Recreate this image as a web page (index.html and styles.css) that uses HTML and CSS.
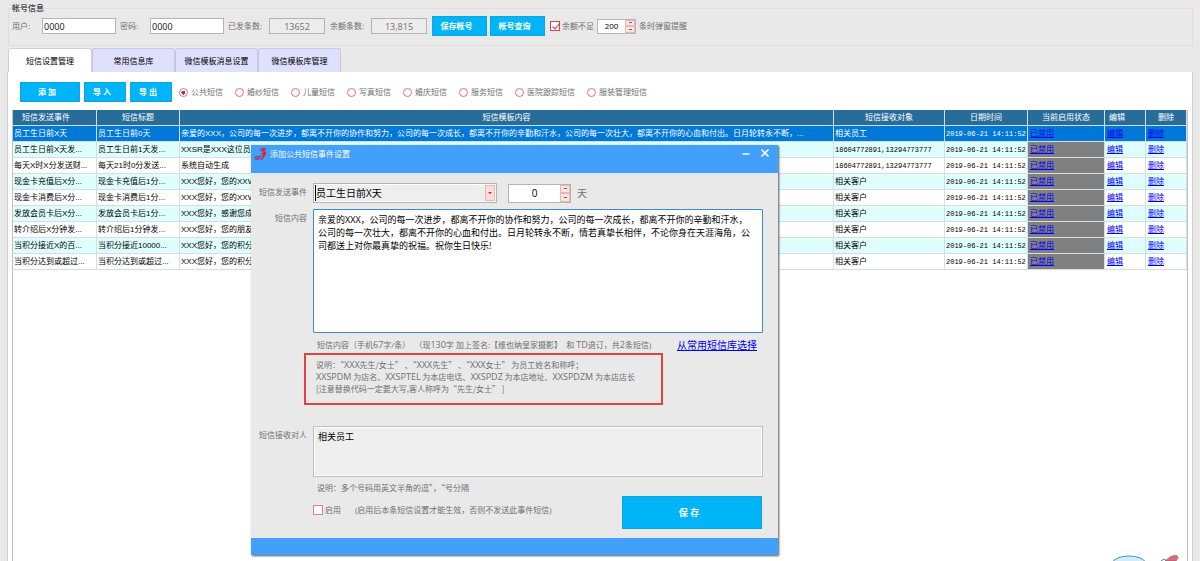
FILE: index.html
```html
<!DOCTYPE html>
<html lang="zh-CN">
<head>
<meta charset="utf-8">
<title>短信设置管理</title>
<link rel="stylesheet" href="styles.css">
</head>
<body>
<fieldset class="account">
  <legend>帐号信息</legend>
  <div class="account-row">
    <label class="w-user" for="user">用户:</label><input class="field" id="user" type="text" value="0000">
    <label class="w-user" for="pass">密码:</label><input class="field" id="pass" type="text" value="0000">
    <label class="w-count" for="sent">已发条数:</label><input class="field readonly" id="sent" type="text" value="13652" readonly>
    <label class="w-count" for="left">余额条数:</label><input class="field readonly" id="left" type="text" value="13,815" readonly>
    <button class="btn btn-account" type="button">保存帐号</button>
    <button class="btn btn-account" type="button">帐号查询</button>
    <label class="check"><input type="checkbox" checked>余额不足</label>
    <span class="spin spin-small"><input type="text" value="200" aria-label="提醒条数"><span class="spin-btns"><button type="button" aria-label="增加"></button><button type="button" aria-label="减少"></button></span></span>
    <span>条时弹窗提醒</span>
  </div>
</fieldset>

<nav class="tabs">
  <button class="tab active" type="button">短信设置管理</button>
  <button class="tab" type="button">常用信息库</button>
  <button class="tab" type="button">微信模板消息设置</button>
  <button class="tab" type="button">微信模板库管理</button>
</nav>

<main class="panel">
  <div class="toolbar">
    <button class="btn btn-add" type="button">添 加</button>
    <button class="btn btn-io" type="button">导 入</button>
    <button class="btn btn-io" type="button">导 出</button>
    <div class="radios">
      <label><input type="radio" name="kind" checked>公共短信</label>
      <label><input type="radio" name="kind">婚纱短信</label>
      <label><input type="radio" name="kind">儿童短信</label>
      <label><input type="radio" name="kind">写真短信</label>
      <label><input type="radio" name="kind">婚庆短信</label>
      <label><input type="radio" name="kind">服务短信</label>
      <label><input type="radio" name="kind">医院跟踪短信</label>
      <label><input type="radio" name="kind">服装管理短信</label>
    </div>
  </div>
  <div class="grid">
    <table>
      <colgroup><col class="c-event"><col class="c-title"><col><col class="c-target"><col class="c-date"><col class="c-state"><col class="c-act"><col class="c-act"></colgroup>
      <thead>
        <tr><th class="left">短信发送事件</th><th>短信标题</th><th>短信模板内容</th><th>短信接收对象</th><th>日期时间</th><th>当前启用状态</th><th class="act">编辑</th><th>删除</th></tr>
      </thead>
      <tbody>
        <tr class="selected"><td>员工生日前X天</td><td>员工生日前0天</td><td>亲爱的XXX，公司的每一次进步，都离不开你的协作和努力，公司的每一次成长，都离不开你的辛勤和汗水，公司的每一次壮大，都离不开你的心血和付出。日月轮转永不断，...</td><td>相关员工</td><td class="num">2019-06-21 14:11:52</td><td class="state"><a href="#">已禁用</a></td><td><a href="#">编辑</a></td><td><a href="#">删除</a></td></tr>
        <tr><td>员工生日前X天发...</td><td>员工生日前1天发...</td><td>XXSR是XXX这位员工</td><td class="num">18604772891,13294773777</td><td class="num">2019-06-21 14:11:52</td><td class="state"><a href="#">已禁用</a></td><td><a href="#">编辑</a></td><td><a href="#">删除</a></td></tr>
        <tr><td>每天X时X分发送财...</td><td>每天21时0分发送...</td><td>系统自动生成</td><td class="num">18604772891,13294773777</td><td class="num">2019-06-21 14:11:52</td><td class="state"><a href="#">已禁用</a></td><td><a href="#">编辑</a></td><td><a href="#">删除</a></td></tr>
        <tr><td>现金卡充值后X分...</td><td>现金卡充值后1分...</td><td>XXX您好，您的XXW-</td><td>相关客户</td><td class="num">2019-06-21 14:11:52</td><td class="state"><a href="#">已禁用</a></td><td><a href="#">编辑</a></td><td><a href="#">删除</a></td></tr>
        <tr><td>现金卡消费后X分...</td><td>现金卡消费后1分...</td><td>XXX您好，您的XXW-</td><td>相关客户</td><td class="num">2019-06-21 14:11:52</td><td class="state"><a href="#">已禁用</a></td><td><a href="#">编辑</a></td><td><a href="#">删除</a></td></tr>
        <tr><td>发放会员卡后X分...</td><td>发放会员卡后1分...</td><td>XXX您好，感谢您成</td><td>相关客户</td><td class="num">2019-06-21 14:11:52</td><td class="state"><a href="#">已禁用</a></td><td><a href="#">编辑</a></td><td><a href="#">删除</a></td></tr>
        <tr><td>转介绍后X分钟发...</td><td>转介绍后1分钟发...</td><td>XXX您好，您的朋友</td><td>相关客户</td><td class="num">2019-06-21 14:11:52</td><td class="state"><a href="#">已禁用</a></td><td><a href="#">编辑</a></td><td><a href="#">删除</a></td></tr>
        <tr><td>当积分接近X的百...</td><td>当积分接近10000...</td><td>XXX您好，您的积分</td><td>相关客户</td><td class="num">2019-06-21 14:11:52</td><td class="state"><a href="#">已禁用</a></td><td><a href="#">编辑</a></td><td><a href="#">删除</a></td></tr>
        <tr><td>当积分达到或超过...</td><td>当积分达到或超过...</td><td>XXX您好，您的积分</td><td>相关客户</td><td class="num">2019-06-21 14:11:52</td><td class="state"><a href="#">已禁用</a></td><td><a href="#">编辑</a></td><td><a href="#">删除</a></td></tr>
      </tbody>
    </table>
  </div>
</main>

<section class="dialog" role="dialog" aria-labelledby="dlg-title">
  <header class="dlg-head">
    <svg class="logo" viewBox="0 0 16 16" width="16" height="16" aria-hidden="true">
      <path d="M8 2l3-1.500 2 1-1.500 2.500 2 1.500-1 3-2 2-1.500 3-.5-3 1.500-3-2.500-.5 2.500-1.500z" fill="#d8283c"/>
      <path d="M7 2l2 2M1 11l3-1.500 2 1 2-2M2 12.500l4-1 3 1" fill="none" stroke="#a93a68" stroke-width="1.300"/>
    </svg>
    <h1 id="dlg-title">添加公共短信事件设置</h1>
    <button type="button" class="win-btn" aria-label="最小化"><svg viewBox="0 0 10 10" width="10" height="10"><path d="M1.500 6h7" stroke="#fff" stroke-width="1.500"/></svg></button>
    <button type="button" class="win-btn" aria-label="关闭"><svg viewBox="0 0 10 10" width="10" height="10"><path d="M1.500 1.500l7 7M8.500 1.500l-7 7" stroke="#fff" stroke-width="1.600"/></svg></button>
  </header>
  <form class="dlg-body">
    <label class="lab" for="event">短信发送事件</label>
    <div class="event-row">
      <span class="combo"><select id="event"><option>员工生日前X天</option></select><i class="combo-arrow"></i></span>
      <span class="spin spin-large"><input type="text" value="0" aria-label="天数"><span class="spin-btns"><button type="button" aria-label="增加"></button><button type="button" aria-label="减少"></button></span></span>
      <span class="day">天</span>
    </div>
    <label class="lab" for="content">短信内容</label>
    <div>
      <textarea class="content" id="content">亲爱的XXX，公司的每一次进步，都离不开你的协作和努力，公司的每一次成长，都离不开你的辛勤和汗水，公司的每一次壮大，都离不开你的心血和付出。日月轮转永不断，情若真挚长相伴，不论你身在天涯海角，公司都送上对你最真挚的祝福。祝你生日快乐!</textarea>
      <div class="count"><span>短信内容（手机<b>67</b>字/条）&nbsp;&nbsp;（现<b>130</b>字 加上签名:【维也纳皇家摄影】&nbsp; 和 <b>TD</b>退订，共<b>2</b>条短信)</span><a href="#">从常用短信库选择</a></div>
      <p class="note">说明：“<b>XXX</b>先生/女士” 、“<b>XXX</b>先生” 、“<b>XXX</b>女士” 为员工姓名和称呼；<br><b>XXSPDM</b> 为店名、<b>XXSPTEL</b> 为本店电话、<b>XXSPDZ</b> 为本店地址、<b>XXSPDZM</b> 为本店店长<br>[注意替换代码一定要大写,客人称呼为“先生/女士” ]</p>
    </div>
    <label class="lab" for="receiver">短信接收对人</label>
    <div>
      <textarea class="receiver" id="receiver" readonly>相关员工</textarea>
      <p class="hint">说明：多个号码用英文半角的逗”，“号分隔</p>
      <div class="enable">
        <label class="check"><input type="checkbox">启用</label>
        <span class="enable-text">(启用后本条短信设置才能生效，否则不发送此事件短信)</span>
        <button class="btn btn-save" type="button">保 存</button>
      </div>
    </div>
  </form>
  <footer class="dlg-foot"></footer>
</section>

<svg class="mascot" viewBox="0 0 70 6" width="70" height="6" aria-hidden="true">
  <ellipse cx="16" cy="9" rx="17" ry="8" fill="#d3ecfb" stroke="#4a93bd"/>
  <path d="M48 6l3-2 3 2" fill="none" stroke="#3a83c5"/>
  <path d="M52 6l5-4 4-1.500q4-1 4 2.500l-2 3z" fill="#e06a78" stroke="#8a5560" stroke-width=".6"/>
</svg>
</body>
</html>
```
FILE: styles.css
```css
* { box-sizing: border-box; }

body {
  margin: 0;
  height: 100vh;
  overflow: hidden;
  position: relative;
  display: flex;
  flex-direction: column;
  background: #e9e9e9;
  color: #707070;
  font: 8px/12px "Open Sans", "Noto Sans CJK SC", sans-serif;
}

input, button, select, textarea { font: inherit; margin: 0; }
button { padding: 0; cursor: pointer; }
a { color: #0000f0; text-decoration: underline; }
p, h1 { margin: 0; font-weight: 400; }

/* Account bar */
.account {
  margin: 2px 7px 0 8px;
  padding: 2px 3px 9px;
  border: 1px solid #e8dadb;
  min-width: 0;
}
.account legend { padding: 0; color: #000; }
.account-row { display: flex; align-items: center; height: 20px; white-space: nowrap; }
.w-user { width: 30px; }
.w-count { width: 41px; }
.field {
  width: 74px;
  height: 16px;
  margin-right: 4px;
  padding: 0 1px;
  border: 1px solid #b4b4b4;
  background: #fff;
  color: #111;
  font-size: 9px;
}
.field.readonly { width: 56px; margin-right: 5px; background: #ececec; color: #707070; text-align: center; }

.btn { border: 1px solid #10a4e4; background: #00b4f8; color: #fff; font-weight: 700; }
.btn-account { width: 55px; height: 20px; margin-right: 3px; padding-right: 6px; }

.check { display: flex; align-items: center; gap: 2px; }
.check input {
  appearance: none;
  width: 10px;
  height: 10px;
  border: 1px solid #e0808c;
  background: #fff;
}
.check input:checked { position: relative; border-color: #d8414f; }
.check input:checked::after {
  content: "";
  position: absolute;
  left: 3px;
  top: 0;
  width: 3px;
  height: 6px;
  border: solid #d8303c;
  border-width: 0 1px 1px 0;
  transform: rotate(40deg);
}
.account .check { margin: 0 3px 0 2px; }

.spin { display: flex; background: #fff; border: 1px solid #b4b4b4; }
.spin input { flex: 1; min-width: 0; border: 0; padding: 0; background: none; color: #000; text-align: center; }
.spin-btns { display: flex; flex-direction: column; width: 10px; }
.spin-btns button {
  flex: 1;
  display: flex;
  align-items: center;
  justify-content: center;
  min-height: 0;
  border: 1px solid #e5b9b9;
  background: #fce4e2;
}
.spin-btns button::after { content: ""; width: 3px; height: 1px; background: #d04040; }
.spin-small { width: 39px; height: 15px; margin-right: 3px; }
.spin-large { width: 63px; height: 19px; font-size: 10px; }

/* Tabs */
.tabs { display: flex; margin: 2px 0 0 8px; }
.tab {
  width: 83px;
  height: 24px;
  border: 1px solid #c8c8dc;
  border-bottom: 0;
  border-radius: 3px 3px 0 0;
  background: #dfe0fd;
  color: #000;
}
.tab.active { width: 84px; background: #fff; border-color: #d0d0d0; }

.panel {
  flex: 1;
  min-height: 0;
  display: flex;
  flex-direction: column;
  margin: 0 7px 0 7px;
  padding: 10px 4px 0;
  background: #fff;
  border: solid #d0d0d0;
  border-width: 0 1px;
}
.toolbar { display: flex; align-items: center; gap: 4px; padding-left: 8px; height: 20px; }
.toolbar .btn { height: 20px; }
.btn-add { width: 60px; padding-right: 6px; }
.btn-io { width: 42px; padding-right: 6px; }
.radios { display: flex; gap: 12px; margin-left: 3px; white-space: nowrap; }
.radios label { display: flex; align-items: center; gap: 3px; }
.radios input {
  appearance: none;
  width: 9px;
  height: 9px;
  border: 1px solid #e0707f;
  border-radius: 50%;
  background: #fff;
}
.radios input:checked { background: radial-gradient(circle, #c82838 0 2px, #fff 2px); }

/* Message table */
.grid { flex: 1; margin-top: 8px; border: solid #b8c4d0; border-width: 0 1px; }
.grid table { width: 100%; table-layout: fixed; border-collapse: separate; border-spacing: 0; color: #000; }
.c-event { width: 84px; }
.c-title { width: 83px; }
.c-target { width: 111px; }
.c-date { width: 83px; }
.c-state { width: 77px; }
.c-act { width: 41px; }
.grid th, .grid td {
  height: 16px;
  padding: 0 1px;
  overflow: hidden;
  white-space: nowrap;
  line-height: 12px;
  border: solid #d3dfe6;
  border-width: 0 1px 1px 0;
  font-family: "Liberation Sans", "Noto Sans CJK SC", sans-serif;
}
.grid th { background: #286c99; color: #fff; font-weight: 400; padding: 0; }
.grid th.left { text-align: left; padding-left: 9px; }
.grid th.act { text-align: left; padding-left: 4px; }
.grid td:nth-last-child(-n+3) { padding-left: 2px; }
.grid tbody tr:nth-child(even) { background: #dfffff; }
.grid tbody tr.selected { background: #0078d8; color: #fff; }
.grid td.num { font: 7px/12px "Liberation Mono", monospace; }
.grid td.state { background: #808080; }
.grid tr.selected td.state { background: #0078d8; }

/* Dialog window */
.dialog {
  position: absolute;
  left: 251px;
  top: 145px;
  width: 527px;
  background: #e9e9e9;
  box-shadow: 1px 1px 2px #555;
}
.dlg-head { display: flex; align-items: flex-start; height: 28px; padding: 2px 7px 0 2px; background: #429ffa; color: #fff; }
.dlg-head h1 { flex: 1; margin-left: 1px; font-size: 8px; line-height: 13px; }
.win-btn { width: 12px; height: 12px; margin-left: 7px; border: 0; background: none; display: flex; align-items: center; justify-content: center; }
.dlg-body {
  display: grid;
  grid-template-columns: 56px 1fr;
  column-gap: 6px;
  row-gap: 6px;
  padding: 10px 15px 9px 0;
}
.lab { text-align: right; white-space: nowrap; padding-top: 3px; height: 15px; }
.dlg-body > div { min-width: 0; }
.event-row { display: flex; align-items: center; height: 20px; }
.combo { display: flex; width: 184px; height: 20px; margin-right: 11px; padding: 1px; border: 1px solid #b4b4b4; background: #fff; }
.combo select {
  appearance: none;
  flex: 1;
  border: 0;
  border-left: 1px solid #000;
  border-radius: 0;
  padding: 0;
  background: #eee;
  color: #000;
  font-size: 10px;
}
.combo-arrow { display: flex; align-items: center; justify-content: center; width: 10px; border: 1px solid #eab8b4; background: #fcdcd8; }
.combo-arrow::after { content: ""; border: 2px solid transparent; border-top-color: #d03030; border-bottom: 0; }
.day { margin-left: 6px; font-size: 10px; }
textarea {
  display: block;
  width: 100%;
  resize: none;
  overflow: hidden;
  padding: 3px 10px 3px 4px;
  color: #000;
  font-size: 9px;
  line-height: 13px;
}
.content { height: 124px; border: 1px solid #3a8cc8; border-radius: 1px; background: #fff; }
.count { display: flex; justify-content: space-between; align-items: center; height: 20px; padding: 4px 6px 0 4px; white-space: nowrap; }
.count a { font-size: 10px; }
.count b, .note b { font-family: "Open Sans", sans-serif; font-size: 9px; font-weight: 400; line-height: 1; }
.note {
  width: 359px;
  height: 52px;
  margin-left: -9px;
  padding: 4px 10px;
  border: 2px solid #e04440;
  white-space: nowrap;
}
.note, .hint { font-family: "Noto Sans CJK SC", sans-serif; }
.dlg-body > .lab:nth-of-type(3) { padding-top: 18px; }
.dlg-body > div:last-child { padding-top: 15px; }
.receiver { height: 51px; border: 1px solid #b8c2c6; box-shadow: inset 0 0 0 1px #fff; background: #efefef; }
.hint { padding: 5px 4px 2px; }
.enable { display: flex; align-items: center; white-space: nowrap; padding-right: 1px; }
.enable-text { flex: 1; margin-left: 14px; }
.enable .check, .enable-text { padding-bottom: 6px; }
.btn-save { width: 140px; height: 33px; padding-right: 6px; font-size: 9px; }
.dlg-foot { height: 17px; background: #429ffa; }

.mascot { position: absolute; right: 17px; bottom: 0; }
```
